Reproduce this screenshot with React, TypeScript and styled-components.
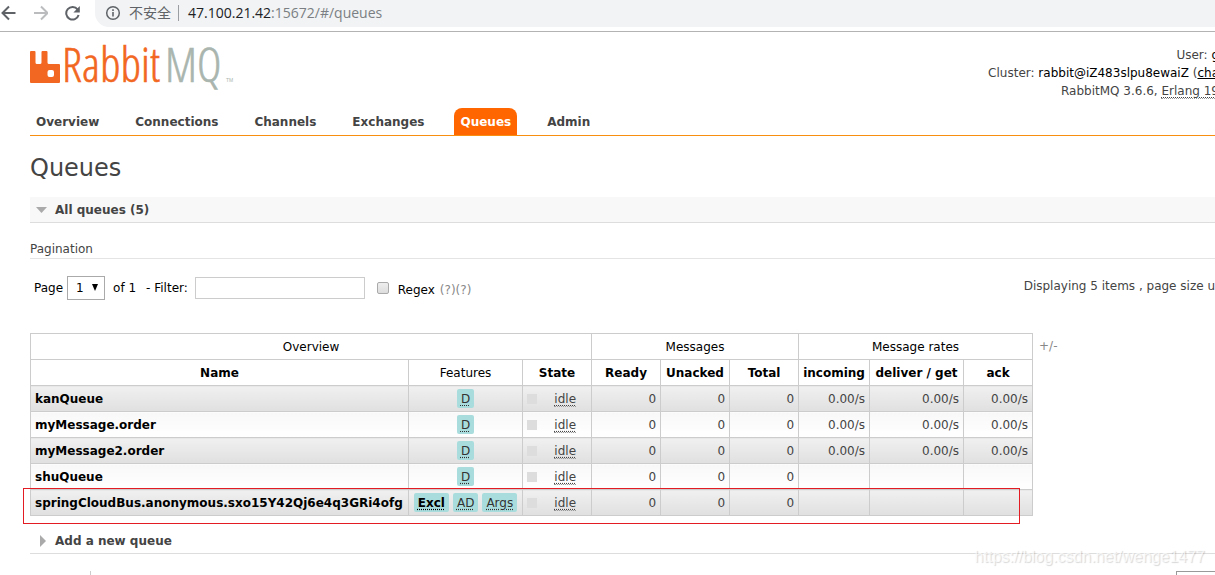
import React from "react";
import styled, { createGlobalStyle } from "styled-components";

const GlobalStyle = createGlobalStyle`
  * { box-sizing: border-box; }
  body {
    margin: 0;
    background: #fff;
    color: #444;
    font: 12px/16px Verdana, "DejaVu Sans", sans-serif;
  }
`;

const Shell = styled.div`
  height: 100vh;
  overflow: hidden;
`;

const AddressBar = styled.div`
  display: flex;
  align-items: flex-start;
  height: 32px;
  border-bottom: 1px solid #b3b3b3;
`;

const BrowserButtons = styled.div`
  display: flex;
  gap: 16px;
  width: 95px;
  padding-top: 5px;
`;

const IconButton = styled.button`
  display: block;
  width: 16px;
  height: 16px;
  padding: 0;
  border: 0;
  background: none;
`;

const UrlBox = styled.div`
  flex: 1;
  display: flex;
  align-items: center;
  height: 27px;
  padding: 0 0 1px 10px;
  border-radius: 0 0 0 14px;
  background: #f1f3f4;
  color: #7b7f83;
  font: 14px/20px "Open Sans", "Noto Sans CJK SC", sans-serif;
  white-space: nowrap;
`;

const Insecure = styled.span`
  margin-left: 8px;
  padding-right: 7px;
  color: #5f6368;
  line-height: 16px;
  border-right: 1px solid #9a9da1;
`;

const Url = styled.span`
  margin-left: 9px;
  b {
    font-weight: 400;
    color: #202124;
  }
`;

const Page = styled.div`
  padding-left: 30px;
`;

const Header = styled.header`
  display: flex;
  justify-content: space-between;
  align-items: flex-start;
  height: 76px;
  padding-top: 14px;
`;

const Logo = styled.a`
  display: block;
  svg { display: block; overflow: visible; }
`;

const Status = styled.ul`
  list-style: none;
  margin: 0 -4px 0 0;
  padding: 0;
  text-align: right;
  line-height: 18px;
  white-space: nowrap;
  a, b { color: #000; font-weight: 400; }
`;

const Hint = styled.abbr`
  text-decoration: underline dotted;
  text-underline-offset: 2px;
  border-bottom: 1px dotted #999;
`;

const Nav = styled.nav`
  display: flex;
  gap: 24px;
  border-bottom: 1px solid #f98f11;
`;

const Tab = styled.a<{ $active?: boolean }>`
  padding: 6px 6px 5px;
  border-radius: 8px 8px 0 0;
  background: ${(p) => (p.$active ? "#f60" : "transparent")};
  color: ${(p) => (p.$active ? "#fff" : "#444")};
  font-weight: 700;
  text-decoration: none;
`;

const Title = styled.h1`
  margin: 16px 0 13px;
  font-size: 24px;
  line-height: 32px;
  font-weight: 400;
`;

const SectionTitle = styled.h2<{ $open?: boolean }>`
  display: flex;
  align-items: center;
  height: 26px;
  margin: 0;
  padding-left: 6px;
  border-bottom: 1px solid #ddd;
  background: ${(p) => (p.$open ? "#f8f8f8" : "transparent")};
  font-size: 12px;
  line-height: 16px;
  svg { margin-right: 8px; }
`;

const SubTitle = styled.h3`
  margin: 18px 0 0;
  padding-bottom: 1px;
  border-bottom: 1px solid #e4e4e4;
  font-size: 12px;
  font-weight: 400;
`;

const Controls = styled.div`
  display: flex;
  align-items: center;
  margin-top: 17px;
  padding-left: 4px;
  color: #000;
  white-space: nowrap;
`;

const PageSelect = styled.div`
  position: relative;
  margin: 0 8px 0 4px;
  select {
    appearance: none;
    display: block;
    width: 38px;
    height: 24px;
    padding: 0 0 0 8px;
    border: 1px solid #aaa;
    border-radius: 0;
    background: #fff;
    color: #000;
    font: inherit;
  }
  svg {
    position: absolute;
    right: 7px;
    top: 8px;
    pointer-events: none;
  }
`;

const FilterLabel = styled.label`
  margin: 0 7px 0 10px;
`;

const FilterInput = styled.input`
  width: 170px;
  height: 22px;
  border: 1px solid #ccc;
  font: inherit;
`;

const Check = styled.input`
  appearance: none;
  width: 12px;
  height: 12px;
  margin: 0 9px 0 12px;
  border: 1px solid #aaa;
  border-radius: 2px;
  background: linear-gradient(#eee, #ddd);
`;

const Regex = styled.div`
  display: flex;
  gap: 5px;
  padding-top: 3px;
`;

const Help = styled.span`
  color: #888;
`;

const Displaying = styled.span`
  margin-left: auto;
  padding-bottom: 4px;
  color: #444;
`;

const TableArea = styled.div`
  display: flex;
  align-items: flex-start;
  gap: 6px;
  margin: 33px 0 12px;
  color: #888;
  line-height: 26px;
`;

const TableFrame = styled.div`
  position: relative;
`;

const Highlight = styled.div`
  position: absolute;
  left: -7px;
  right: 13px;
  bottom: -8px;
  height: 36px;
  border: 1px solid #e31b23;
  pointer-events: none;
`;

const Table = styled.table`
  table-layout: fixed;
  width: 1003px;
  border-collapse: collapse;
  color: #444;
  line-height: 16px;
  tbody tr:nth-child(odd) td { background: linear-gradient(#f0f0f0, #e0e0e0); }
  tbody tr:nth-child(even) td { background: linear-gradient(#f8f8f8, #fff); }
`;

const Th = styled.th<{ $plain?: boolean }>`
  height: 26px;
  padding: 0;
  border: 1px solid #ccc;
  color: #000;
  font-weight: ${(p) => (p.$plain ? 400 : 700)};
  white-space: nowrap;
`;

const Td = styled.td<{ $align?: string }>`
  height: 26px;
  padding: 0 4px;
  border: 1px solid #ccc;
  text-align: ${(p) => p.$align || "right"};
  white-space: nowrap;
`;

const QueueLink = styled.a`
  color: #000;
  font-weight: 700;
  text-decoration: none;
`;

const Tags = styled.div`
  display: flex;
  justify-content: center;
  gap: 4px;
`;

const Tag = styled.abbr<{ $strong?: boolean }>`
  padding: 2px 4px 1px;
  border-radius: 2px;
  background: #a9dddd;
  color: ${(p) => (p.$strong ? "#000" : "#333")};
  font-weight: ${(p) => (p.$strong ? 700 : 400)};
  text-decoration: underline dotted;
  text-underline-offset: 2px;
`;

const State = styled.div`
  display: flex;
  align-items: center;
  justify-content: space-between;
  padding-right: 11px;
`;

const Swatch = styled.span`
  width: 10px;
  height: 10px;
  background: #ddd;
`;

const Footer = styled.footer`
  display: flex;
  justify-content: space-between;
  margin-top: 17px;
`;

const FooterItem = styled.div`
  width: 61px;
  height: 16px;
  border-right: 1px solid #ccc;
`;

const UpdateSelect = styled.select`
  appearance: none;
  width: 48px;
  height: 24px;
  margin-right: -9px;
  border: 1px solid #999;
  border-radius: 0;
  background: #fff;
`;

const Watermark = styled.div`
  position: absolute;
  right: 10px;
  top: 547px;
  color: rgba(255, 255, 255, 0.7);
  font: 16px/20px "Liberation Sans", Arial, sans-serif;
  text-shadow: 1px 1px 1px rgba(0, 0, 0, 0.16);
`;

const tabs = ["Overview", "Connections", "Channels", "Exchanges", "Queues", "Admin"];

const columns = [
  { name: "Name", width: 378 },
  { name: "Features", width: 114 },
  { name: "State", width: 69 },
  { name: "Ready", width: 69 },
  { name: "Unacked", width: 69 },
  { name: "Total", width: 69 },
  { name: "incoming", width: 71 },
  { name: "deliver / get", width: 94 },
  { name: "ack", width: 69 },
];

const queues = [
  { name: "kanQueue", tags: ["D"], rate: "0.00/s" },
  { name: "myMessage.order", tags: ["D"], rate: "0.00/s" },
  { name: "myMessage2.order", tags: ["D"], rate: "0.00/s" },
  { name: "shuQueue", tags: ["D"], rate: "" },
  { name: "springCloudBus.anonymous.sxo15Y42Qj6e4q3GRi4ofg", tags: ["Excl", "AD", "Args"], rate: "" },
];

export default function App() {
  return (
    <Shell>
      <GlobalStyle />
      <AddressBar>
        <BrowserButtons>
          <IconButton aria-label="Back">
            <svg width="16" height="16" viewBox="0 0 16 16" fill="none" stroke="#5f6368" strokeWidth="2">
              <path d="M15.5 8H3M9 1.5L2.5 8L9 14.5" />
            </svg>
          </IconButton>
          <IconButton aria-label="Forward">
            <svg width="16" height="16" viewBox="0 0 16 16" fill="none" stroke="#babcbe" strokeWidth="2">
              <path d="M2 8H14.5M9 1.5L15.5 8L9 14.5" />
            </svg>
          </IconButton>
          <IconButton aria-label="Reload">
            <svg width="16" height="16" viewBox="0 0 16 16">
              <path d="M13.6 4.5A6.3 6.3 0 1 0 14.6 10" fill="none" stroke="#5f6368" strokeWidth="2" />
              <path d="M15.8 1V7.4H9.4Z" fill="#5f6368" />
            </svg>
          </IconButton>
        </BrowserButtons>
        <UrlBox>
          <svg width="16" height="16" viewBox="0 0 16 16" fill="none" stroke="#5f6368">
            <circle cx="8" cy="8" r="6.3" strokeWidth="1.5" />
            <path d="M8 7V11.5M8 4.3V6" strokeWidth="1.6" />
          </svg>
          <Insecure>不安全</Insecure>
          <Url><b>47.100.21.42</b>:15672/#/queues</Url>
        </UrlBox>
      </AddressBar>

      <Page>
        <Header>
          <Logo href="#" aria-label="RabbitMQ">
            <svg width="210" height="46" viewBox="0 0 210 46">
              <path
                fill="#f26722"
                fillRule="evenodd"
                d="M1 5H4.500Q5.500 5 5.500 6V16.500Q5.500 18 7 18H10Q11.500 18 11.500 16.500V6Q11.500 5 12.500 5H16.500Q17.500 5 17.500 6V16.500Q17.500 18 19 18H29Q30 18 30 19V36Q30 37 29 37H1Q0 37 0 36V6Q0 5 1 5ZM19.500 24Q17.500 24 17.500 26V29Q17.500 31 19.500 31H22Q24 31 24 29V26Q24 24 22 24Z"
              />
              <g
                fontFamily="'Open Sans Condensed Light', 'Open Sans Condensed', sans-serif"
                fontWeight="300"
                fontSize="47"
                strokeWidth="0.6"
              >
                <text x="32" y="36" fill="#f26722" stroke="#f26722">Rabbit</text>
                <text x="135" y="36" fill="#a9b5ae" stroke="#a9b5ae">MQ</text>
              </g>
              <text x="196" y="36" fill="#a9b5ae" fontFamily="'Liberation Sans', sans-serif" fontSize="5">TM</text>
            </svg>
          </Logo>
          <Status>
            <li>User: <b>g</b></li>
            <li>Cluster: <b>rabbit@iZ483slpu8ewaiZ</b> (<a href="#">cha</a></li>
            <li>RabbitMQ 3.6.6, <Hint>Erlang 19</Hint></li>
          </Status>
        </Header>

        <Nav>
          {tabs.map((t) => (
            <Tab key={t} href="#" $active={t === "Queues"}>{t}</Tab>
          ))}
        </Nav>

        <Title>Queues</Title>
        <SectionTitle $open>
          <svg width="11" height="6" viewBox="0 0 11 6"><path d="M0 0H11L5.500 6Z" fill="#aaa" /></svg>
          All queues (5)
        </SectionTitle>

        <SubTitle>Pagination</SubTitle>
        <Controls>
          <label htmlFor="page">Page</label>
          <PageSelect>
            <select id="page" defaultValue="1"><option>1</option></select>
            <svg width="6" height="7" viewBox="0 0 6 7"><path d="M0 0H6L3 7Z" fill="#000" /></svg>
          </PageSelect>
          <span>of 1</span>
          <FilterLabel htmlFor="filter">- Filter:</FilterLabel>
          <FilterInput id="filter" type="text" />
          <Check id="regex" type="checkbox" />
          <Regex>
            <label htmlFor="regex">Regex</label>
            <Help>(?)(?)</Help>
          </Regex>
          <Displaying>Displaying 5 items , page size u</Displaying>
        </Controls>

        <TableArea>
          <TableFrame>
            <Table>
              <colgroup>
                {columns.map((c) => <col key={c.name} width={c.width} />)}
              </colgroup>
              <thead>
                <tr>
                  <Th $plain colSpan={3}>Overview</Th>
                  <Th $plain colSpan={3}>Messages</Th>
                  <Th $plain colSpan={3}>Message rates</Th>
                </tr>
                <tr>
                  {columns.map((c) => (
                    <Th key={c.name} $plain={c.name === "Features"}>{c.name}</Th>
                  ))}
                </tr>
              </thead>
              <tbody>
                {queues.map((q) => (
                  <tr key={q.name}>
                    <Td $align="left"><QueueLink href="#">{q.name}</QueueLink></Td>
                    <Td $align="center">
                      <Tags>
                        {q.tags.map((t) => <Tag key={t} $strong={t === "Excl"}>{t}</Tag>)}
                      </Tags>
                    </Td>
                    <Td $align="left">
                      <State><Swatch /><span><Hint>idle</Hint></span></State>
                    </Td>
                    <Td>0</Td>
                    <Td>0</Td>
                    <Td>0</Td>
                    <Td>{q.rate}</Td>
                    <Td>{q.rate}</Td>
                    <Td>{q.rate}</Td>
                  </tr>
                ))}
              </tbody>
            </Table>
            <Highlight />
          </TableFrame>
          <span>+/-</span>
        </TableArea>

        <SectionTitle>
          <svg width="11" height="12" viewBox="0 0 11 12"><path d="M4 0L10 6L4 12Z" fill="#aaa" /></svg>
          Add a new queue
        </SectionTitle>

        <Footer>
          <FooterItem />
          <UpdateSelect aria-label="Update interval" />
        </Footer>
      </Page>
      <Watermark>https://blog.csdn.net/wenge1477</Watermark>
    </Shell>
  );
}
